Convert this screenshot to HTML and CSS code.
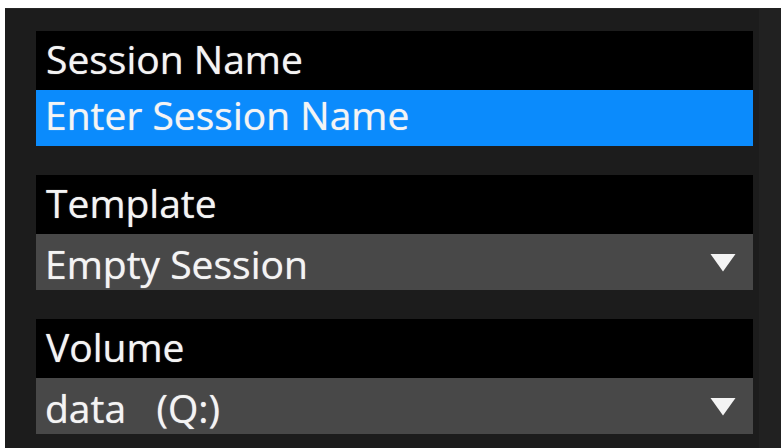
FILE: index.html
```html
<!DOCTYPE html>
<html lang="en">
<head>
<meta charset="utf-8">
<title>New Session</title>
<link rel="stylesheet" href="styles.css">
</head>
<body>
<div class="panel">
  <div class="fields">
    <div class="field">
      <div class="label">Session Name</div>
      <div class="control input">Enter Session Name</div>
    </div>
    <div class="field">
      <div class="label">Template</div>
      <div class="control select">
        <span class="value">Empty Session</span>
        <svg class="arrow" width="26" height="19" viewBox="0 0 26 19"><polygon points="0.5,1 25.5,1 13,18.5" fill="#f4f4f4"/></svg>
      </div>
    </div>
    <div class="field">
      <div class="label">Volume</div>
      <div class="control select">
        <span class="value">data&nbsp;&nbsp;&nbsp;(Q:)</span>
        <svg class="arrow" width="26" height="19" viewBox="0 0 26 19"><polygon points="0.5,1 25.5,1 13,18.5" fill="#f4f4f4"/></svg>
      </div>
    </div>
  </div>
</div>
</body>
</html>
```

FILE: styles.css
```css
html, body {
  margin: 0;
  padding: 0;
  background: #ffffff;
}

body {
  width: 781px;
  height: 448px;
  overflow: hidden;
  font-family: "Open Sans", "Noto Sans", sans-serif;
}

.panel {
  box-sizing: border-box;
  margin: 8px 0 0 5px;
  width: 776px;
  height: 440px;
  background: #1c1c1c;
  border-top: 1px solid #262626;
  border-right: 22px solid #212121;
  padding: 22px 0 0 31px;
}

.fields {
  display: flex;
  flex-direction: column;
  gap: 29px;
  width: 717px;
}

.field {
  display: flex;
  flex-direction: column;
}

.label,
.control {
  box-sizing: border-box;
  color: #f4f4f4;
  font-size: 39px;
  letter-spacing: 0;
  white-space: nowrap;
  text-shadow: 0 0 1px rgba(255, 255, 255, 0.7);
}

.label {
  background: #000000;
  height: 59px;
  line-height: 55px;
  padding: 0 0 4px 10px;
}

.control {
  height: 56px;
  line-height: 50px;
  padding: 0 0 6px 9px;
}

.input {
  background: #0b8bfc;
}

.select {
  background: #484848;
  display: flex;
  align-items: flex-start;
  justify-content: space-between;
  padding: 3px 17px 0 9px;
}

.value {
  line-height: 53px;
}

.arrow {
  display: block;
  margin-top: 16px;
}
```
